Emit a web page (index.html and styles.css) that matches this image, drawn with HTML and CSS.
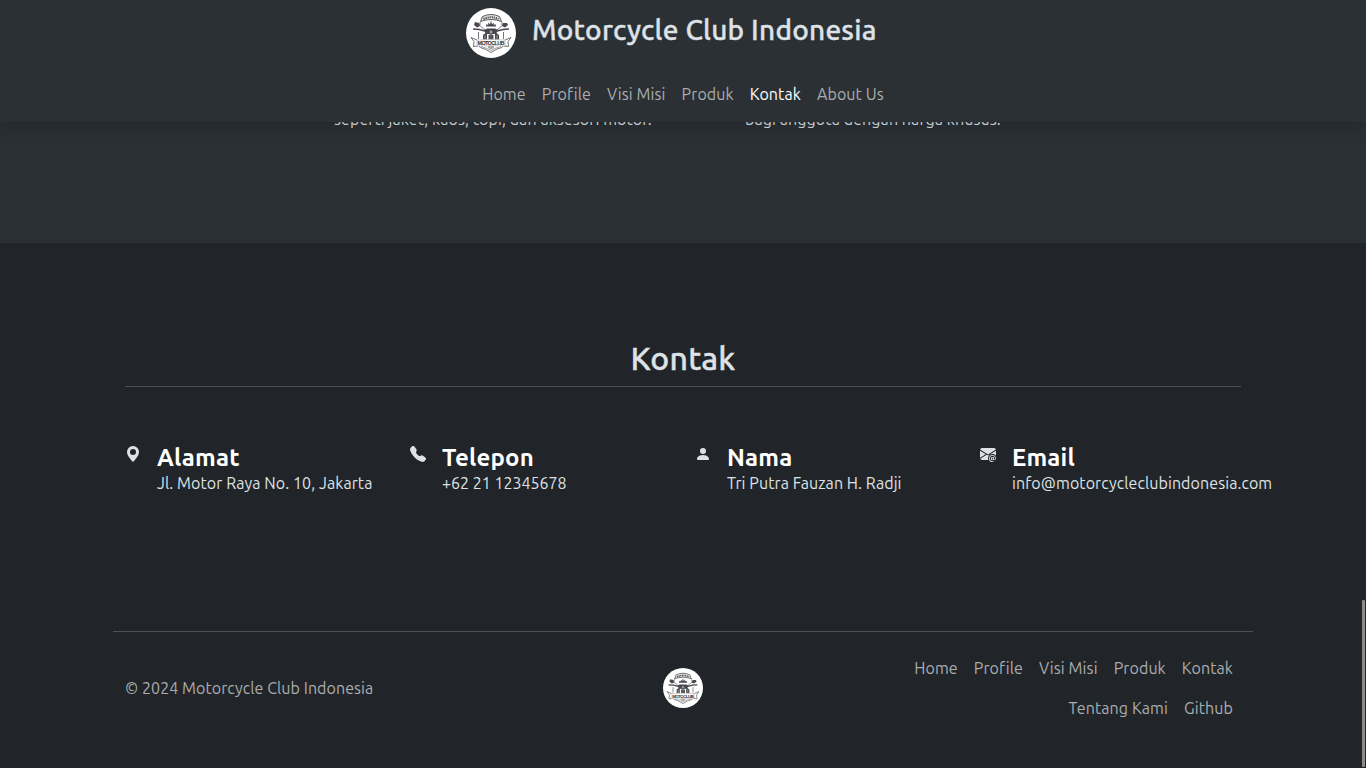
FILE: index.html
```html
<!DOCTYPE html>
<html lang="id">
<head>
<meta charset="utf-8">
<title>Motorcycle Club Indonesia</title>
<link rel="stylesheet" href="styles.css">
</head>
<body>
<header class="topbar">
  <div class="brand">
    <svg class="brand-logo" viewBox="0 0 50 50">
      <g id="logo">
        <circle cx="25" cy="25" r="25" fill="#fff"/>
        <g fill="none" stroke="#4a4a50" stroke-width=".9">
          <path d="M16.500 8.500Q25 4.500 33.500 8.500L35.500 13.500Q25 9.500 14.500 13.500Z" fill="#e4e4e4"/>
          <path d="M17.500 11Q25 7.500 32.500 11" stroke="#444" stroke-width="2" stroke-dasharray="1.200 .9"/>
          <path d="M14 14V17M36 14V17M12.500 24V31M37.500 24V31M12.500 38Q14 40 19 41L25 44.500L31 41Q36 40 37.500 38" stroke="#66666b"/>
          <path d="M15 38.500Q17 39.500 20 40L25 42.500L30 40Q33 39.500 35 38.500" stroke="#99999c"/>
          <path d="M11 32L5 29.500L8 33.500L7.500 38.500L12 38M39 32L45 29.500L42 33.500L42.500 38.500L38 38" stroke="#66666b"/>
          <path d="M7 21L13 21.500L19 23M43 21L37 21.500L31 23" stroke-width="1.500"/>
          <path d="M12 16L20 23M38 16L30 23" stroke="#66666b"/>
        </g>
        <g fill="#48484e">
          <path d="M9 14L13 15L14 18L11 19.500L8 17ZM41 15L37 15L36 18L39 19.500L42 17Z"/>
          <path d="M20 18.500L20.500 16L22 17L22.500 14.500L24 16.500L25 12.500L26 16.500L27.500 14.500L28 17L29.500 16L30 18.500Z"/>
          <path d="M18 22L21 20.500H29L32 22L30.500 25L33 27V31.500H29V26H21V31.500H17V27L19.500 25Z"/>
        </g>
        <path d="M22.500 27H27.500V31.500H22.500Z" fill="#55555a"/>
        <path d="M19 27V31M31 27V31" stroke="#bbb" stroke-width=".7"/>
        <circle cx="25" cy="24" r="2.300" fill="#999" stroke="#333"/>
        <path d="M22 38V40L25 41.500L28 40V38Z" fill="#aaa"/>
        <path d="M11 32Q25 31 39 32V38Q25 37.500 11 38Z" fill="#fafafa" stroke="#999" stroke-width=".5"/>
        <text x="25" y="37" text-anchor="middle" class="logo-word" textLength="27">MOTOCLUB</text>
      </g>
    </svg>
    <h1 class="brand-name">Motorcycle Club Indonesia</h1>
  </div>
  <nav class="nav">
    <a>Home</a><a>Profile</a><a>Visi Misi</a><a>Produk</a><a class="active">Kontak</a><a>About Us</a>
  </nav>
</header>

<section class="products">
  <p>seperti jaket, kaos, topi, dan aksesori motor.</p>
  <p>bagi anggota dengan harga khusus.</p>
</section>

<section class="contact">
  <h2 class="contact-title">Kontak</h2>
  <div class="contact-grid">
    <div class="item">
      <svg class="icon" viewBox="0 0 16 16"><path d="M8 16s6-5.686 6-10A6 6 0 0 0 2 6c0 4.314 6 10 6 10m0-7a3 3 0 1 1 0-6 3 3 0 0 1 0 6"/></svg>
      <div><h3>Alamat</h3><p>Jl. Motor Raya No. 10, Jakarta</p></div>
    </div>
    <div class="item">
      <svg class="icon" viewBox="0 0 16 16"><path fill-rule="evenodd" d="M1.885.511a1.745 1.745 0 0 1 2.610.163L6.290 2.980c.329.423.445.974.315 1.494l-.547 2.190a.68.68 0 0 0 .178.643l2.457 2.457a.68.68 0 0 0 .644.178l2.189-.547a1.750 1.750 0 0 1 1.494.315l2.306 1.794c.829.645.905 1.870.163 2.611l-1.034 1.034c-.740.740-1.846 1.065-2.877.702a18.600 18.600 0 0 1-7.010-4.420 18.600 18.600 0 0 1-4.420-7.009c-.362-1.030-.037-2.137.703-2.877z"/></svg>
      <div><h3>Telepon</h3><p class="phone">+62 21 12345678</p></div>
    </div>
    <div class="item">
      <svg class="icon" viewBox="0 0 16 16"><path d="M3 14s-1 0-1-1 1-4 6-4 6 3 6 4-1 1-1 1zm5-6a3 3 0 1 0 0-6 3 3 0 0 0 0 6"/></svg>
      <div><h3>Nama</h3><p>Tri Putra Fauzan H. Radji</p></div>
    </div>
    <div class="item">
      <svg class="icon" viewBox="0 0 16 16"><path d="M2 2A2 2 0 0 0 .05 3.555L8 8.414l7.950-4.859A2 2 0 0 0 14 2zm-2 9.800V4.698l5.803 3.546zm6.761-2.970-6.570 4.026A2 2 0 0 0 2 14h6.256A4.500 4.500 0 0 1 8 12.500a4.490 4.490 0 0 1 1.606-3.446l-.367-.225L8 9.586zM16 9.671V4.697l-5.803 3.546.338.208A4.500 4.500 0 0 1 12.500 8c1.414 0 2.675.652 3.500 1.671"/><path d="M15.834 12.244c0 1.168-.577 2.025-1.587 2.025-.503 0-1.002-.228-1.120-.648h-.043c-.118.416-.543.643-1.015.643-.770 0-1.259-.542-1.259-1.434v-.529c0-.844.481-1.400 1.260-1.400.585 0 .870.333.953.630h.030v-.568h.905v2.190c0 .272.180.420.411.420.315 0 .639-.415.639-1.390v-.118c0-1.277-.950-2.326-2.484-2.326h-.040c-1.582 0-2.640 1.067-2.640 2.724v.157c0 1.867 1.237 2.654 2.570 2.654h.045c.507 0 .935-.070 1.180-.180v.731c-.219.100-.643.175-1.237.175h-.044C10.438 16 9 14.820 9 12.646v-.214C9 10.360 10.421 9 12.485 9h.035c2.120 0 3.314 1.430 3.314 3.034zm-4.040.210v.227c0 .586.227.800.581.800.310 0 .564-.170.564-.743v-.367c0-.516-.275-.708-.572-.708-.346 0-.573.245-.573.791"/></svg>
      <div><h3>Email</h3><p>info@motorcycleclubindonesia.com</p></div>
    </div>
  </div>
</section>

<footer class="footer">
  <p>© 2024 Motorcycle Club Indonesia</p>
  <svg class="footer-logo" viewBox="0 0 50 50"><use href="#logo"/></svg>
  <nav class="nav footer-nav">
    <a>Home</a><a>Profile</a><a>Visi Misi</a><a>Produk</a><a>Kontak</a><a>Tentang Kami</a><a>Github</a>
  </nav>
</footer>
<div class="scroll-thumb"></div>
</body>
</html>
```
FILE: styles.css
```css
* { box-sizing: border-box; }
html { overflow: hidden; }
body {
  margin: 0;
  height: 768px;
  overflow: hidden;
  background: #212529;
  color: #dee2e6;
  font: 400 16px/24px Ubuntu, "Noto Sans", sans-serif;
  letter-spacing: .085px;
}
h1, h2, h3, p { margin: 0; white-space: nowrap; }
.logo-word { font: 700 5.500px "Liberation Sans", sans-serif; letter-spacing: 0; fill: #333; }

.topbar {
  position: relative;
  z-index: 2;
  height: 122px;
  padding-top: 8px;
  background: #2b3035;
  box-shadow: 0 8px 16px rgba(0, 0, 0, .15);
}
.brand { display: flex; gap: 16px; width: 434px; margin: 0 auto; height: 66px; }
.brand-logo { width: 50px; height: 50px; flex: none; }
.brand-name, .contact-title {
  font-weight: 500;
  letter-spacing: .23px;
  -webkit-text-stroke: .35px currentColor;
}
.brand-name { padding-top: 5px; font-size: 28px; line-height: 34px; }
.nav { display: flex; justify-content: center; gap: 16px; line-height: 40px; color: #aaacae; letter-spacing: .1px; }
.nav a { white-space: nowrap; }
.nav .active { color: #fff; }

.products {
  display: grid;
  grid-template-columns: 411px 1fr;
  height: 136px;
  margin-top: -15px;
  padding-left: 334px;
  background: #2b3035;
}

.contact { height: 388px; padding: 96px 125px 0; }
.contact-title {
  height: 48px;
  border-bottom: 1px solid #4d5154;
  text-align: center;
  font-size: 32px;
  line-height: 38px;
}
.contact-grid { display: grid; grid-template-columns: repeat(4, 285px); padding-top: 57px; }
.item { display: flex; gap: 16px; }
.icon { width: 16px; height: 16px; margin-top: 2px; fill: currentColor; flex: none; }
.item h3 { color: #fff; font-size: 24px; line-height: 27px; font-weight: 700; letter-spacing: .2px; }
.phone { letter-spacing: 0; }

.footer {
  display: grid;
  grid-template-columns: repeat(3, 380px);
  align-items: center;
  width: 1140px;
  margin: 0 auto;
  padding-top: 16px;
  border-top: 1px solid #4d5154;
  color: #aaacae;
}
.footer p { padding-left: 12px; letter-spacing: .07px; }
.footer-logo { width: 40px; height: 40px; justify-self: center; }
.footer-nav { flex-wrap: wrap; justify-content: flex-end; gap: 0 16px; padding-right: 20px; }

.scroll-thumb {
  position: absolute;
  right: 1px;
  top: 600px;
  width: 3px;
  height: 167px;
  border-radius: 1px;
  background: #8c8c8c;
}
```
